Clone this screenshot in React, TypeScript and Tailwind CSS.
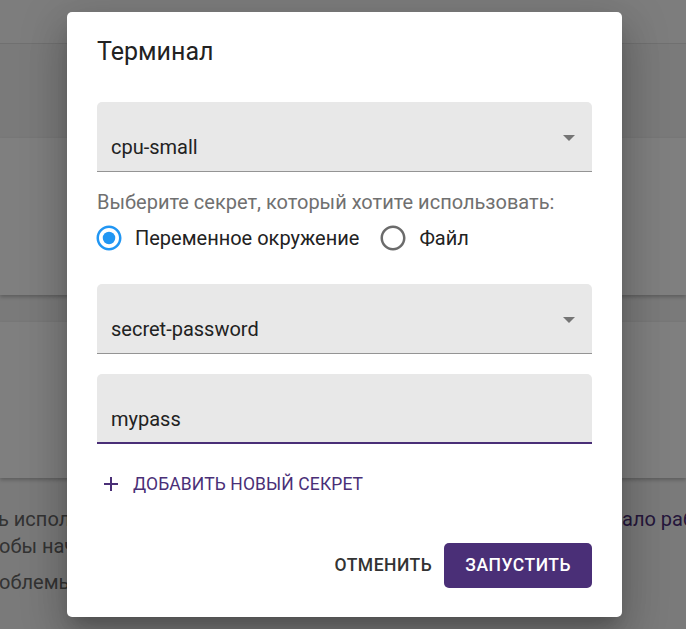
import React from 'react';

const ArrowDrop = () => (
  <svg width="12" height="6" viewBox="0 0 10 5" className="absolute right-[17px] top-[33px] fill-[#757575]">
    <path d="M0 0l5 5 5-5z" />
  </svg>
);

const RadioIcon = ({ checked }: { checked: boolean }) => (
  <svg width="30" height="30" viewBox="0 0 24 24" className={checked ? 'fill-[#2196f3] shrink-0' : 'fill-[#6b6b6b] shrink-0'}>
    <path d="M12 2C6.48 2 2 6.48 2 12s4.48 10 10 10 10-4.48 10-10S17.52 2 12 2zm0 18c-4.42 0-8-3.58-8-8s3.58-8 8-8 8 3.58 8 8-3.58 8-8 8z" />
    {checked && <circle cx="12" cy="12" r="5" />}
  </svg>
);

const SelectField = ({ value }: { value: string }) => (
  <div className="relative h-[70px] rounded-t-[5px] bg-[#e8e8e8] border-b border-[#949494]">
    <div className="pl-[14px] pt-[31px] text-[20px] leading-[29px] text-[#222]">{value}</div>
    <ArrowDrop />
  </div>
);

export default function App() {
  return (
    <div className="relative w-[686px] h-[629px] overflow-hidden bg-[#f5f5f5] font-['Roboto','Liberation_Sans',sans-serif]">
      {/* page behind the dialog */}
      <div className="h-[44px] bg-[#fafafa] border-b border-[#e0e0e0]" />
      <div className="mt-[94px] h-[157px] bg-white shadow-[0_2px_4px_rgba(0,0,0,0.25)]" />
      <div className="mt-[27px] h-[156px] bg-white shadow-[0_2px_4px_rgba(0,0,0,0.25)]" />
      <div className="mt-[28px] text-[20px] leading-[27px] text-[#666] whitespace-nowrap">
        <div className="flex -ml-[2px]">
          <span className="w-[624px] shrink-0 overflow-hidden">ь использовать терминал, перейдите в раздел «Нач</span>
          <span className="text-[#4a2f77]">ало работы»</span>
        </div>
        <div className="-ml-[1px]">обы начать работу с проектом.</div>
        <div className="mt-[9px] -ml-[1px]">облемы, обратитесь в поддержку.</div>
      </div>

      {/* overlay + dialog */}
      <div className="absolute inset-0 bg-black/50 flex items-center justify-center">
        <div className="w-[555px] h-[605px] ml-[3px] bg-white rounded-[5px] px-[30px] shadow-[0_11px_15px_-7px_rgba(0,0,0,0.2),0_24px_38px_3px_rgba(0,0,0,0.14),0_9px_46px_8px_rgba(0,0,0,0.12)] flex flex-col">
          <h2 className="pt-[20px] text-[25px] leading-[40px] text-[#222]">Терминал</h2>

          <div className="mt-[30px]">
            <SelectField value="cpu-small" />
          </div>

          <div className="mt-[18px] text-[20px] leading-[24px] text-[#707070]">
            Выберите секрет, который хотите использовать:
          </div>

          <div className="h-[48px] flex items-center text-[20px] text-[#222]">
            <div className="flex items-center -ml-[3px]">
              <RadioIcon checked />
              <span className="ml-[11px]">Переменное окружение</span>
            </div>
            <div className="flex items-center ml-[19px]">
              <RadioIcon checked={false} />
              <span className="ml-[11px]">Файл</span>
            </div>
          </div>

          <div className="mt-[22px]">
            <SelectField value="secret-password" />
          </div>

          <div className="mt-[20px] h-[70px] rounded-t-[5px] bg-[#e8e8e8] border-b-2 border-[#4a2f77]">
            <div className="pl-[14px] pt-[31px] text-[20px] leading-[29px] text-[#222]">mypass</div>
          </div>

          <button className="mt-[20px] self-start h-[40px] flex items-center pl-[2px] pr-[10px] text-[17.5px] uppercase tracking-[0.1px] text-[#4a2f77]">
            <svg width="24" height="24" viewBox="0 0 24 24" className="fill-[#4a2f77]">
              <path d="M19 13h-6v6h-2v-6H5v-2h6V5h2v6h6v2z" />
            </svg>
            <span className="ml-[10px]">Добавить новый секрет</span>
          </button>

          <div className="mt-auto mb-[29px] flex items-center justify-end">
            <button className="h-[45px] px-[10px] text-[17.5px] uppercase tracking-[0.5px] font-medium text-[#333]">
              Отменить
            </button>
            <button className="ml-[2px] h-[45px] px-[21px] rounded-[5px] bg-[#4a2f77] text-white text-[17.5px] uppercase tracking-[0.5px] font-medium">
              Запустить
            </button>
          </div>
        </div>
      </div>
    </div>
  );
}
